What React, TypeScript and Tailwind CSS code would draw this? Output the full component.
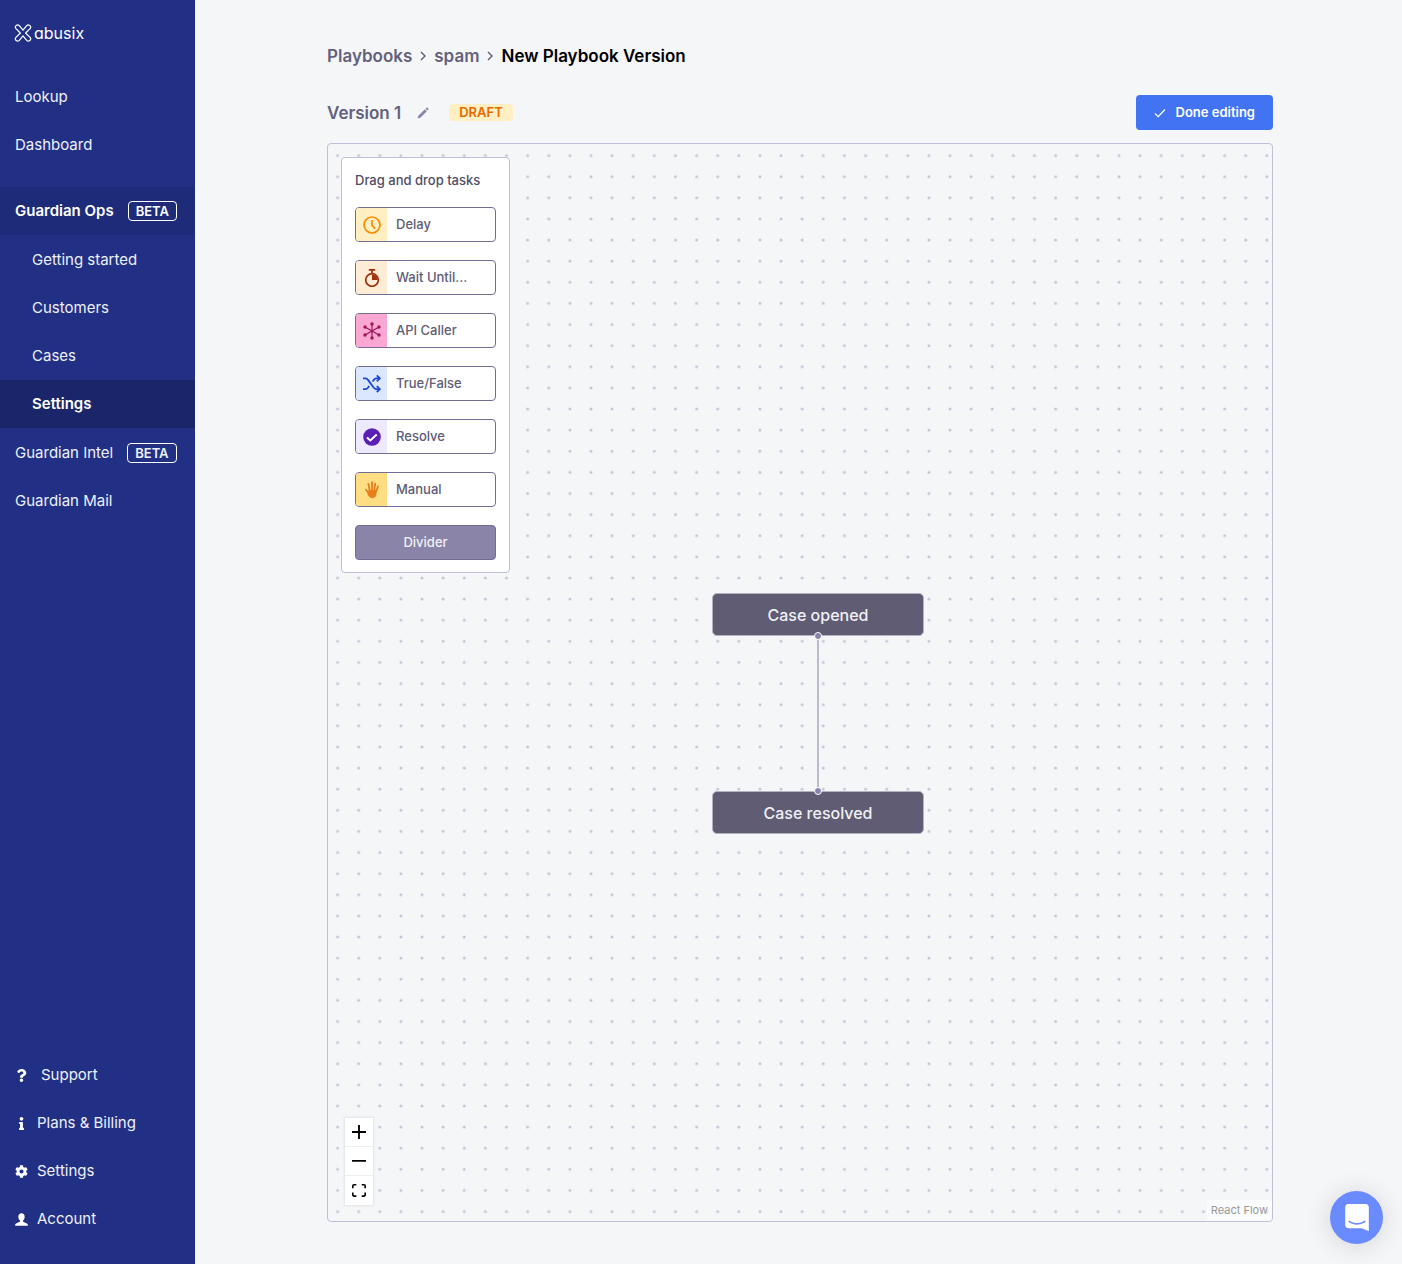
import type { ReactNode } from "react"
import { FaCog, FaInfo, FaQuestion } from "react-icons/fa"

// Logo

const Logo = () => (
  <a href="#" className="flex items-center gap-0.5 text-white">
    <svg viewBox="0 0 18 20" className="h-5 w-[18px]" fill="none" stroke="currentColor" strokeWidth="1.2" strokeLinejoin="round">
      <path d="M9 7.2 12.7 2.6a2.3 2.3 0 0 1 3.6 2.8L11.6 10l4.7 4.6a2.3 2.3 0 0 1-3.6 2.8L9 12.8l-3.7 4.6a2.3 2.3 0 0 1-3.6-2.8L6.4 10 1.7 5.4a2.3 2.3 0 0 1 3.6-2.8z" />
    </svg>
    <span className="text-base leading-5 [font-feature-settings:'cv11']">abusix</span>
  </a>
)

// Task icons

const DelayIcon = () => (
  <svg viewBox="0 0 18 18" className="size-[18px]" fill="none" stroke="#f88c00" strokeWidth="1.7">
    <circle cx="9" cy="9" r="8" />
    <path d="M9 4v5.2l3 3.4" />
  </svg>
)

const WaitIcon = () => (
  <svg viewBox="0 0 18 18" className="size-[18px]" fill="none" stroke="#a1300e" strokeWidth="1.7">
    <circle cx="9" cy="11" r="6.3" />
    <path d="M5.8.9h6.4M9 1v4" />
    <path d="M9 5.5a5.5 5.5 0 0 1 5.5 5.5H9z" fill="#a1300e" stroke="none" />
  </svg>
)

const ApiIcon = () => (
  <svg viewBox="0 0 18 18" className="size-[18px]" fill="#9d1750" stroke="#9d1750" strokeWidth="1.2">
    <path d="M9 2v14M2 5l14 8M2 13l14-8" />
    <g stroke="none">
      <circle cx="9" cy="2" r="1.7" />
      <circle cx="9" cy="16" r="1.7" />
      <circle cx="2" cy="5" r="1.7" />
      <circle cx="16" cy="5" r="1.7" />
      <circle cx="2" cy="13" r="1.7" />
      <circle cx="16" cy="13" r="1.7" />
    </g>
  </svg>
)

const BranchIcon = () => (
  <svg viewBox="0 0 18 18" className="size-[18px]" fill="none" stroke="#1f44dc" strokeWidth="1.8">
    <path d="M0 3.4h2.4c1.4 0 2 .6 2.8 1.7l5.4 7.4c.8 1 1.4 1.6 2.8 1.6H17" />
    <path d="M0 14.1h2.4c1.4 0 2-.6 2.8-1.6l1-1.4M9.6 6.6l1-1.5c.8-1.1 1.4-1.7 2.8-1.7H17" />
    <path d="m13.8.4 3.1 3-3.1 3M13.8 11.1l3.1 3-3.1 3" />
  </svg>
)

const ResolveIcon = () => (
  <svg viewBox="0 0 18 18" className="size-[18px]">
    <circle cx="9" cy="9" r="8.8" fill="#5a1fb5" />
    <path d="m4 9.4 3.3 3L13.700 6.400" fill="none" stroke="#fff" strokeWidth="2" />
  </svg>
)

const ManualIcon = () => (
  <svg viewBox="0 0 18 18" className="size-[18px]" fill="none" stroke="#e67e1c" strokeLinecap="round" strokeWidth="1.8">
    <path d="M6.8 10 5.4 3M9 9.5V1.2M11.2 10l1-7.3M13 11l1.9-5.6M6 12.6 3 8.8" />
    <path d="M5.8 9.4h7.4l-.2 4.4c-.3 2-1.6 3-3.6 3-2.2 0-3.4-1.2-4.4-3.4z" fill="#e67e1c" strokeWidth=".6" />
  </svg>
)

interface Task {
  name: string
  icon: () => ReactNode
  tint: string
}

const tasks: Task[] = [
  { name: "Delay", icon: DelayIcon, tint: "bg-[#ffefc2]" },
  { name: "Wait Until...", icon: WaitIcon, tint: "bg-[#ffecd5]" },
  { name: "API Caller", icon: ApiIcon, tint: "bg-[#faa7d3]" },
  { name: "True/False", icon: BranchIcon, tint: "bg-[#dbe7fe]" },
  { name: "Resolve", icon: ResolveIcon, tint: "bg-[#ede9fe]" },
  { name: "Manual", icon: ManualIcon, tint: "bg-[#ffdd83]" },
]

// Sidebar

const Beta = () => (
  <span className="rounded border border-white px-[7px] text-[13px] leading-[18px] font-semibold">BETA</span>
)

interface NavItemProps {
  label: string
  className?: string
  beta?: boolean
}

const NavItem = ({ label, className = "pl-[15px]", beta }: NavItemProps) => (
  <a href="#" className={`flex h-12 items-center gap-3.5 ${className}`}>
    {label}
    {beta && <Beta />}
  </a>
)

const UserIcon = () => (
  <svg viewBox="0 0 14 14" className="size-[13px]" fill="currentColor">
    <path d="M7 .4c2.1 0 3.4 1.4 3.4 3.6 0 1.8-.7 3.2-1.7 4v1.3c1.2.9 4.9 1.3 5.1 3.2v1.1H.2v-1.1c.2-1.9 3.9-2.3 5.1-3.2V8c-1-.8-1.7-2.2-1.7-4C3.6 1.8 4.9.4 7 .4z" />
  </svg>
)

const footerLinks = [
  { label: "Support", icon: <FaQuestion className="size-[13px]" />, gap: "gap-[13px]" },
  { label: "Plans & Billing", icon: <FaInfo className="size-[13px]" />, gap: "gap-[9px]" },
  { label: "Settings", icon: <FaCog className="size-[13px]" />, gap: "gap-[9px]" },
  { label: "Account", icon: <UserIcon />, gap: "gap-[9px]" },
]

const Sidebar = () => (
  <aside className="flex w-[195px] shrink-0 flex-col bg-[#213085] pb-[21px] text-[15px] text-[#eef0fa]">
    <div className="px-3.5 pt-[23px] pb-[30px]">
      <Logo />
    </div>
    <nav className="flex flex-col">
      <NavItem label="Lookup" />
      <NavItem label="Dashboard" />
      <NavItem label="Guardian Ops" beta className="mt-[18px] bg-[#1e2b78] pl-[15px] font-semibold text-white" />
      <div className="flex flex-col py-px">
        <NavItem label="Getting started" className="pl-8" />
        <NavItem label="Customers" className="pl-8" />
        <NavItem label="Cases" className="pl-8" />
        <NavItem label="Settings" className="bg-[#1b266a] pl-8 font-semibold text-white" />
      </div>
      <NavItem label="Guardian Intel" beta />
      <NavItem label="Guardian Mail" />
    </nav>
    <nav className="mt-auto flex flex-col">
      {footerLinks.map((item) => (
        <a key={item.label} href="#" className={`flex h-12 items-center pl-[15px] ${item.gap}`}>
          <span className="text-white">{item.icon}</span>
          {item.label}
        </a>
      ))}
    </nav>
  </aside>
)

// Header

const Chevron = () => (
  <svg viewBox="0 0 6 10" className="h-2.5 w-1.5" fill="none" stroke="#5f5c76" strokeWidth="1.4">
    <path d="m1 1 4 4-4 4" />
  </svg>
)

const Header = () => (
  <header>
    <nav aria-label="Breadcrumb" className="flex items-center gap-2 text-[17px] leading-6 font-semibold text-[#64617d]">
      <a href="#">Playbooks</a>
      <Chevron />
      <a href="#">spam</a>
      <Chevron />
      <span className="text-black">New Playbook Version</span>
    </nav>
    <div className="mt-[27px] mb-[13px] flex items-center">
      <h1 className="text-[17px] leading-6 font-semibold text-[#64617d]">Version 1</h1>
      <button aria-label="Rename version" className="ml-4">
        <svg viewBox="0 0 12 12" className="size-3" fill="#8782aa">
          <path d="M.6 11.5 1.4 8.8 7.9 2.3l1.9 1.9-6.5 6.500zM8.600 1.600l.8-.8a.9.900 0 0 1 1.200 0l.7.700a.9.900 0 0 1 0 1.200l-.8.800z" />
        </svg>
      </button>
      <span className="ml-5 rounded bg-[#ffefc3] px-2.5 text-[13px] leading-[17px] font-semibold text-[#e56a00]">DRAFT</span>
      <button className="ml-auto flex h-[35px] items-center gap-2.5 rounded bg-[#4173f2] px-[18px] text-[13px] font-semibold text-white">
        <svg viewBox="0 0 12 12" className="size-3" fill="none" stroke="currentColor" strokeWidth="1.2">
          <path d="m1 6.5 3.200 3.200L11 2.500" />
        </svg>
        Done editing
      </button>
    </div>
  </header>
)

// Canvas

const TaskPanel = () => (
  <section className="absolute top-[13px] left-[13px] flex w-[169px] flex-col rounded border border-[#c0bed8] bg-white px-[13px] pt-[11px] pb-3 text-[13px] text-[#5f5c76]">
    <h2 className="mb-4 leading-[22px] font-medium text-[#504d66]">Drag and drop tasks</h2>
    <div className="flex flex-col gap-[18px]">
      {tasks.map(({ name, icon: Icon, tint }) => (
        <button key={name} className="flex h-[35px] items-center overflow-hidden rounded border border-[#726e93] font-medium">
          <span className={`flex h-full w-[31px] items-center justify-center ${tint}`}>
            <Icon />
          </span>
          <span className="pl-[9px]">{name}</span>
        </button>
      ))}
      <button className="h-[35px] rounded border border-[#726e93] bg-[#8984a8] font-medium text-[#f1f0f6]">Divider</button>
    </div>
  </section>
)

const Controls = () => (
  <div className="absolute bottom-4 left-[17px] flex w-[28px] flex-col divide-y divide-[#eeeeee] bg-white shadow-[0_0_2px_1px_rgba(0,0,0,0.08)]">
    <button aria-label="Zoom in" className="flex h-[29px] items-center justify-center">
      <svg viewBox="0 0 32 32" className="w-3.5">
        <path d="M32 18.133H18.133V32h-4.266V18.133H0v-4.266h13.867V0h4.266v13.867H32z" />
      </svg>
    </button>
    <button aria-label="Zoom out" className="flex h-[29px] items-center justify-center">
      <svg viewBox="0 0 32 5" className="w-3.5">
        <path d="M0 0h32v4.2H0z" />
      </svg>
    </button>
    <button aria-label="Fit view" className="flex h-[29px] items-center justify-center">
      <svg viewBox="0 0 32 30" className="w-3.5">
        <path d="M3.692 4.63c0-.53.4-.938.939-.938h5.215V0H4.708C2.13 0 0 2.054 0 4.63v5.216h3.692V4.631zM27.354 0h-5.2v3.692h5.17c.53 0 .984.4.984.939v5.215H32V4.631A4.624 4.624 0 0027.354 0zm.954 24.83c0 .532-.4.94-.939.94h-5.215v3.768h5.215c2.577 0 4.631-2.13 4.631-4.707v-5.139h-3.692v5.139zm-23.677.94c-.531 0-.939-.4-.939-.94v-5.138H0v5.139c0 2.577 2.13 4.707 4.708 4.707h5.138V25.77H4.631z" />
      </svg>
    </button>
  </div>
)

const flowNodes = [
  { label: "Case opened", position: "top-[449px] left-[384px]", handle: "-bottom-[5px]" },
  { label: "Case resolved", position: "top-[647px] left-[384px]", handle: "-top-[5px]" },
]

const Canvas = () => (
  <section className="relative flex-1 overflow-hidden rounded border border-[#c0bed8]">
    <svg className="absolute inset-0 size-full">
      <pattern id="dots" x="-1" y="1" width="21.12" height="21.12" patternUnits="userSpaceOnUse">
        <circle cx="10.56" cy="10.56" r="1.5" fill="#c5c3da" />
      </pattern>
      <rect width="100%" height="100%" fill="url(#dots)" />
      <path d="M490 491v156" stroke="#bdbcc6" strokeWidth="2" />
    </svg>
    {flowNodes.map((node) => (
      <div
        key={node.label}
        className={`absolute flex h-[43px] w-[212px] items-center justify-center rounded-[5px] border border-[#b4b2c2] bg-[#5f5c74] text-base font-medium text-[#f0f0f4] ${node.position}`}
      >
        {node.label}
        <span className={`absolute size-2 rounded-full border border-white bg-[#8782aa] ${node.handle}`} />
      </div>
    ))}
    <TaskPanel />
    <Controls />
    <a href="#" className="absolute right-0 bottom-0 bg-white/50 px-1 py-0.5 text-[11px] leading-[17px] text-[#999999]">
      React Flow
    </a>
  </section>
)

const ChatLauncher = () => (
  <button
    aria-label="Open chat"
    className="fixed right-[19px] bottom-5 flex size-[53px] items-center justify-center rounded-full bg-[#6a8bff] shadow-[0_2px_26px_rgba(0,0,0,0.14)]"
  >
    <svg viewBox="0 0 28 32" className="h-[27px] w-6" fill="#fff">
      <path d="M28 32s-4.714-1.855-8.527-3.34H3.437C1.54 28.66 0 27.026 0 25.013V3.644C0 1.633 1.54 0 3.437 0h21.125c1.898 0 3.437 1.632 3.437 3.645v18.404H28V32zm-4.139-11.982a.88.88 0 00-1.292-.105c-.03.026-3.015 2.681-8.57 2.681-5.486 0-8.517-2.636-8.571-2.684a.88.88 0 00-1.29.107 1.01 1.01 0 00-.219.708.992.992 0 00.318.664c.142.128 3.537 3.15 9.762 3.15 6.226 0 9.621-3.022 9.763-3.15a.992.992 0 00.317-.664 1.01 1.01 0 00-.218-.707z" />
    </svg>
  </button>
)

export default function App() {
  return (
    <div className="flex min-h-screen bg-[#f5f6f8] font-['Inter',sans-serif]">
      <Sidebar />
      <main className="flex flex-1 flex-col pt-11 pr-[129px] pb-[42px] pl-[132px]">
        <Header />
        <Canvas />
      </main>
      <ChatLauncher />
    </div>
  )
}
